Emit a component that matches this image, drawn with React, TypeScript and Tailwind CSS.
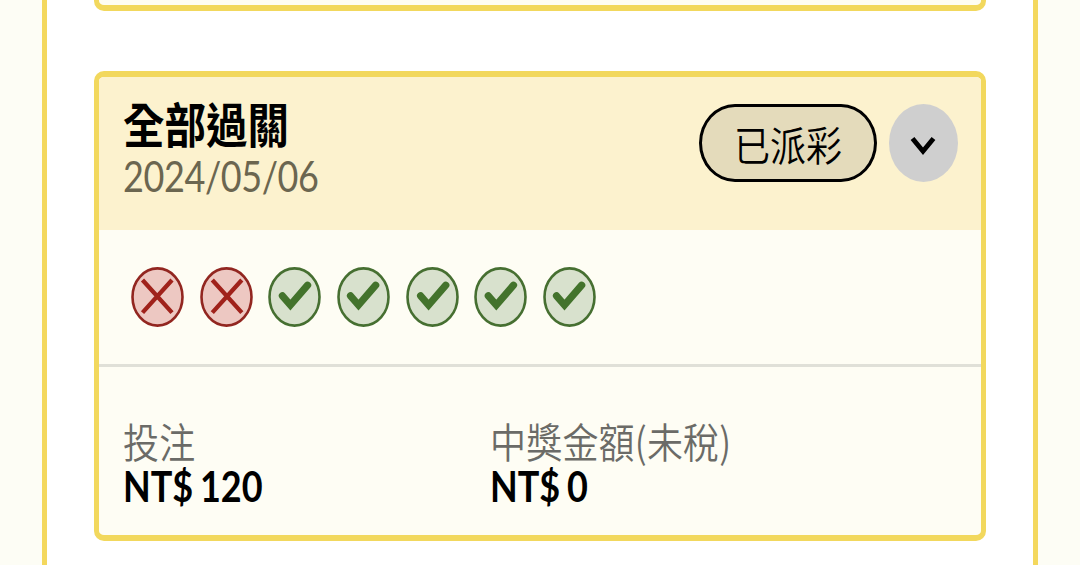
import clsx from "clsx";

type Result = {
  win: boolean;
  shift: number;
};

type Amount = {
  label: string;
  value: string;
};

// shift: horizontal offset of the mark inside its circle
const results: Result[] = [
  { win: false, shift: -0.3 },
  { win: false, shift: 0.5 },
  { win: true, shift: 0.6 },
  { win: true, shift: -0.3 },
  { win: true, shift: 0.8 },
  { win: true, shift: 0.5 },
  { win: true, shift: -0.3 },
];

const amounts: Amount[] = [
  { label: "投注", value: "NT$ 120" },
  { label: "中獎金額(未稅)", value: "NT$ 0" },
];

const ResultIcon = ({ win, shift }: Result) => (
  <svg className="h-[60px] w-[53px] shrink-0" viewBox="0 0 53 60" fill="none">
    <ellipse
      cx="26.5"
      cy="30"
      rx="25"
      ry="28.6"
      strokeWidth="2.6"
      className={clsx(win ? "fill-[#d8e1cd] stroke-[#466f31]" : "fill-[#edc8c2] stroke-[#922620]")}
    />
    <g transform={`translate(${shift} 0)`}>
      {win ? (
        <path d="M13.8 28.8 L21.8 38 L39 18.2" stroke="#43732c" strokeWidth="7.2" strokeLinecap="round" />
      ) : (
        <path d="M11.8 13 L41.3 45.6 M41.3 13 L11.8 45.6" stroke="#a0221b" strokeWidth="4.3" />
      )}
    </g>
  </svg>
);

const App = () => {
  return (
    <div className="h-[565px] overflow-hidden bg-[#fdfdf5] px-[42px] font-['Lato','Noto_Sans_CJK_TC',sans-serif] text-4xl text-black">
      <main className="flex h-full w-[996px] flex-col border-x-[5px] border-[#f4d85d] bg-white px-[47px]">
        <section className="h-[11px] shrink-0 rounded-b-[10px] border-x-[5px] border-b-[6px] border-[#f2d85d] bg-[#fefdf4]" />

        <section className="mt-[60px] flex h-[470px] shrink-0 flex-col overflow-hidden rounded-[10px] border-x-[5px] border-y-[6px] border-[#f2d85d] bg-[#fefdf4]">
          <header className="flex h-[153px] shrink-0 justify-between bg-[#fcf2ce] pt-6 pr-[23px] pl-6">
            <div>
              <h1 className="h-[49px] scale-y-[1.16] text-[41.5px] leading-[48px] font-bold">全部過關</h1>
              <p className="h-[50px] scale-y-[1.18] leading-[50px] tracking-[-0.4px] text-[#6b6650]">2024/05/06</p>
            </div>
            <div className="flex gap-3 pt-[3px]">
              <div className="flex h-[78px] w-[178px] items-center justify-center rounded-[36px/39px] border-[3px] border-black bg-[#e4dbbb] pt-[3px]">
                <span className="scale-y-[1.15] font-[350]">已派彩</span>
              </div>
              <button className="flex h-[78px] w-[69px] items-center justify-center rounded-[50%] bg-[#cfcfcf] pt-[6px] pr-[2px]">
                <svg className="h-[20px] w-[26px]" viewBox="0 0 26 20" fill="none">
                  <path d="M2.5 2.5 L13 15.2 L23.5 2.5" stroke="black" strokeWidth="4.9" />
                </svg>
              </button>
            </div>
          </header>

          <div className="flex h-[134px] shrink-0 items-center gap-[15.7px] pl-8">
            {results.map((result, i) => (
              <ResultIcon key={i} {...result} />
            ))}
          </div>

          <div className="flex flex-1 border-t-[3px] border-[#e0e0d8] pt-[50px] pl-6">
            {amounts.map(({ label, value }) => (
              <div key={label} className="w-[367px] shrink-0">
                <p className="h-[46px] scale-y-[1.15] font-['Noto_Sans_CJK_TC',sans-serif] leading-[46px] font-[350] tracking-[0.2px] text-[#6b6b67]">
                  {label}
                </p>
                <p className="h-[46px] scale-y-[1.15] leading-[47px] font-bold tracking-[-0.1px] [word-spacing:-1.5px]">{value}</p>
              </div>
            ))}
          </div>
        </section>
      </main>
    </div>
  );
};

export default App;
